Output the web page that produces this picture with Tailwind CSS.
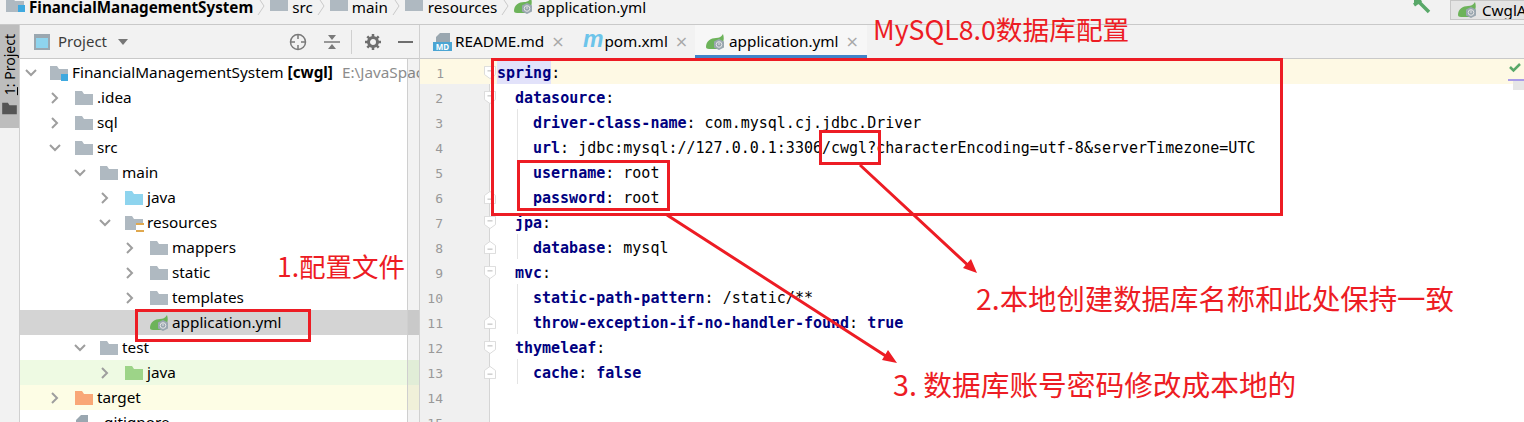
<!DOCTYPE html>
<html lang="en">
<head>
  <meta charset="UTF-8" />
  <title>application.yml - FinancialManagementSystem</title>
  <script src="https://cdn.jsdelivr.net/npm/@tailwindcss/browser@4"></script>
</head>
<body class="w-[1524px] h-[422px] overflow-hidden bg-white text-black font-['Noto_Sans',sans-serif] relative">

  <!-- icon defs -->
  <svg class="hidden">
    <symbol id="folder" viewBox="0 0 18 16"><path d="M0 1h7l2 3h9v11H0z" fill="#afb9c1"/></symbol>
    <symbol id="folder-blue" viewBox="0 0 18 16"><path d="M0 1h7l2 3h9v11H0z" fill="#8ed4ee"/></symbol>
    <symbol id="folder-green" viewBox="0 0 18 16"><path d="M0 1h7l2 3h9v11H0z" fill="#9dd488"/></symbol>
    <symbol id="folder-orange" viewBox="0 0 18 16"><path d="M0 1h7l2 3h9v11H0z" fill="#f9a777"/></symbol>
    <symbol id="right" viewBox="0 0 10 12"><path d="M2 1l5 5-5 5" fill="none" stroke="#9e9e9e" stroke-width="2"/></symbol>
    <symbol id="down" viewBox="0 0 12 10"><path d="M1 2l5 5 5-5" fill="none" stroke="#9e9e9e" stroke-width="2"/></symbol>
    <symbol id="spring" viewBox="0 0 20 16">
      <path d="M0 13C0 7 5 4 10 4c3 0 5-1 7-4 1 3 1 6 0 8l-6 7H3C1 15 0 14 0 13z" fill="#6db35a"/>
      <path d="M13 5l5 2.500v6L13 16l-5-2.500v-6z" fill="#9aa7b0"/>
      <circle cx="13" cy="10.500" r="2.800" fill="none" stroke="#e6e6e6" stroke-width="1"/>
      <path d="M13 8.500v2.500" stroke="#e6e6e6" stroke-width="1"/>
    </symbol>
    <symbol id="fold-open" viewBox="0 0 12 16" preserveAspectRatio="none"><path d="M.5.500h11v10l-5.500 5-5.500-5z" fill="#fff" stroke="#d8d8d8"/><path d="M3.500 6h5" stroke="#b0b0b0"/></symbol>
    <symbol id="fold-close" viewBox="0 0 12 16" preserveAspectRatio="none"><path d="M.5 15.500h11v-10l-5.500-5-5.500 5z" fill="#fff" stroke="#d8d8d8"/><path d="M3.500 10h5" stroke="#b0b0b0"/></symbol>
  </svg>

  <!-- breadcrumb bar -->
  <div class="h-[25px] bg-[#f2f2f2] border-b border-[#c9c9c9] flex items-start text-[15.2px] leading-[14px] overflow-hidden">
    <div class="flex items-center h-[14px] pl-[6px] flex-1">
      <span class="relative w-[23px] h-[16px] -mt-[4px]">
        <svg class="w-[18px] h-[16px]"><use href="#folder"/></svg>
        <i class="absolute left-[12px] top-[8px] w-[7px] h-[7px] bg-[#3fa9df]"></i>
      </span>
      <span class="font-bold">FinancialManagementSystem</span>
      <svg class="w-[8px] h-[18px] ml-[4px] mr-[5px] -mt-[2px]" viewBox="0 0 8 18"><path d="M1 0l6 9-6 9" fill="none" stroke="#c9c9c9"/></svg>
      <svg class="w-[18px] h-[16px] mr-[4px] -mt-[6px]"><use href="#folder"/></svg><span>src</span>
      <svg class="w-[8px] h-[18px] ml-[4px] mr-[5px] -mt-[2px]" viewBox="0 0 8 18"><path d="M1 0l6 9-6 9" fill="none" stroke="#c9c9c9"/></svg>
      <svg class="w-[18px] h-[16px] mr-[4px] -mt-[6px]"><use href="#folder"/></svg><span>main</span>
      <svg class="w-[8px] h-[18px] ml-[4px] mr-[5px] -mt-[2px]" viewBox="0 0 8 18"><path d="M1 0l6 9-6 9" fill="none" stroke="#c9c9c9"/></svg>
      <svg class="w-[18px] h-[16px] mr-[5px] -mt-[6px]"><use href="#folder"/></svg><span>resources</span>
      <svg class="w-[8px] h-[18px] ml-[4px] mr-[5px] -mt-[2px]" viewBox="0 0 8 18"><path d="M1 0l6 9-6 9" fill="none" stroke="#c9c9c9"/></svg>
      <svg class="w-[20px] h-[16px] mr-[3px] -mt-[3px]"><use href="#spring"/></svg><span>application.yml</span>
    </div>
    <svg class="w-[22px] h-[16px] mr-[15px]" viewBox="0 0 22 16"><path d="M1 1l7 0M4 0l12 12M8 0L1 5" fill="none" stroke="#59a869" stroke-width="3.500"/></svg>
    <div class="w-[74px] h-[20px] bg-[#e4e4e4] border border-[#c6c6c6] border-r-0 flex items-center pl-[7px] gap-[4px] overflow-hidden">
      <svg class="w-[20px] h-[16px] shrink-0"><use href="#spring"/></svg><span>CwglApplication</span>
    </div>
  </div>

  <div class="flex h-[397px]">
    <!-- tool window strip -->
    <div class="w-[20px] shrink-0 bg-[#f2f2f2] border-r border-[#d0d0d0]">
      <div class="h-[103px] bg-[#bdbdbd] flex flex-col items-center justify-end pb-[13px]">
        <span class="[writing-mode:vertical-rl] rotate-180 text-[14px] leading-none mb-[7px]"><span class="underline">1</span>: Project</span>
        <svg class="w-[15px] h-[13px]" viewBox="0 0 18 16"><path d="M0 1h7l2 3h9v11H0z" fill="#555"/></svg>
      </div>
    </div>

    <!-- project panel -->
    <div class="w-[400px] shrink-0 flex flex-col border-r border-[#d0d0d0]">
      <div class="h-[34px] bg-[#f2f2f2] border-b border-[#c9c9c9] flex items-center pl-[13px] text-[15px] text-[#3c3c3c]">
        <svg class="w-[18px] h-[18px] mr-[7px]" viewBox="0 0 18 18"><rect x="1" y="1" width="16" height="16" fill="#9aa7b0"/><rect x="3" y="5" width="12" height="10" fill="#8ed4ee"/></svg>
        <span>Project</span>
        <svg class="w-[10px] h-[6px] ml-[11px]" viewBox="0 0 10 6"><path d="M0 0h10L5 6z" fill="#777"/></svg>
        <svg class="w-[18px] h-[18px] ml-[161px]" viewBox="0 0 18 18"><circle cx="9" cy="9" r="7.500" fill="none" stroke="#7a7a7a" stroke-width="1.500"/><path d="M9 1v5M9 12v5M1 9h5M12 9h5" stroke="#7a7a7a" stroke-width="1.500"/></svg>
        <svg class="w-[16px] h-[16px] ml-[17px]" viewBox="0 0 16 16"><path d="M0 8h16" stroke="#7a7a7a" stroke-width="1.500"/><path d="M4 1h8L8 6zM4 15h8l-4-5z" fill="#7a7a7a"/></svg>
        <i class="w-px h-[24px] bg-[#d0d0d0] ml-[11px]"></i>
        <svg class="w-[16px] h-[16px] ml-[13px]" viewBox="0 0 16 16"><circle cx="8" cy="8" r="4.500" fill="none" stroke="#6e6e6e" stroke-width="3"/><path d="M8 0v3M8 13v3M0 8h3M13 8h3M2.300 2.300l2 2M11.700 11.700l2 2M2.300 13.700l2-2M11.700 4.300l2-2" stroke="#6e6e6e" stroke-width="2.500"/></svg>
        <i class="w-[15px] h-[2px] bg-[#6e6e6e] ml-[17px]"></i>
      </div>

      <div class="relative flex-1 pt-[1px] text-[15.300px] overflow-hidden">
        <div class="flex items-center h-[25px] pl-[5px] whitespace-nowrap">
          <svg class="w-[12px] h-[10px] mr-[13px] shrink-0"><use href="#down"/></svg>
          <span class="relative w-[22px] h-[16px] shrink-0"><svg class="w-[18px] h-[16px]"><use href="#folder"/></svg><i class="absolute left-[11px] top-[9px] w-[7px] h-[7px] bg-[#3fa9df]"></i></span>
          <span class="shrink-0">FinancialManagementSystem <b class="font-bold">[cwgl]</b></span>
          <span class="text-[#8c8c8c] ml-[9px] shrink-0">E:\JavaSpace</span>
        </div>
        <div class="flex items-center h-[25px] pl-[30px]"><svg class="w-[10px] h-[12px] mr-[15px]"><use href="#right"/></svg><svg class="w-[18px] h-[16px] mr-[4px]"><use href="#folder"/></svg><span>.idea</span></div>
        <div class="flex items-center h-[25px] pl-[30px]"><svg class="w-[10px] h-[12px] mr-[15px]"><use href="#right"/></svg><svg class="w-[18px] h-[16px] mr-[4px]"><use href="#folder"/></svg><span>sql</span></div>
        <div class="flex items-center h-[25px] pl-[29px]"><svg class="w-[12px] h-[10px] mr-[14px]"><use href="#down"/></svg><svg class="w-[18px] h-[16px] mr-[4px]"><use href="#folder"/></svg><span>src</span></div>
        <div class="flex items-center h-[25px] pl-[54px]"><svg class="w-[12px] h-[10px] mr-[14px]"><use href="#down"/></svg><svg class="w-[18px] h-[16px] mr-[4px]"><use href="#folder"/></svg><span>main</span></div>
        <div class="flex items-center h-[25px] pl-[80px]"><svg class="w-[10px] h-[12px] mr-[15px]"><use href="#right"/></svg><svg class="w-[18px] h-[16px] mr-[4px]"><use href="#folder-blue"/></svg><span>java</span></div>
        <div class="flex items-center h-[25px] pl-[79px]"><svg class="w-[12px] h-[10px] mr-[14px]"><use href="#down"/></svg>
          <span class="relative w-[18px] h-[16px] mr-[4px]"><svg class="w-[18px] h-[16px]"><use href="#folder"/></svg><i class="absolute left-[11px] top-[8px] w-[8px] h-[9px] bg-white border-y-2 border-[#e0a84e]"></i></span><span>resources</span></div>
        <div class="flex items-center h-[25px] pl-[105px]"><svg class="w-[10px] h-[12px] mr-[15px]"><use href="#right"/></svg><svg class="w-[18px] h-[16px] mr-[4px]"><use href="#folder"/></svg><span>mappers</span></div>
        <div class="flex items-center h-[25px] pl-[105px]"><svg class="w-[10px] h-[12px] mr-[15px]"><use href="#right"/></svg><svg class="w-[18px] h-[16px] mr-[4px]"><use href="#folder"/></svg><span>static</span></div>
        <div class="flex items-center h-[25px] pl-[105px]"><svg class="w-[10px] h-[12px] mr-[15px]"><use href="#right"/></svg><svg class="w-[18px] h-[16px] mr-[4px]"><use href="#folder"/></svg><span>templates</span></div>
        <div class="flex items-center h-[25px] pl-[130px] bg-[#d4d4d4]"><svg class="w-[20px] h-[16px] mr-[2px]"><use href="#spring"/></svg><span>application.yml</span></div>
        <div class="flex items-center h-[25px] pl-[54px]"><svg class="w-[12px] h-[10px] mr-[14px]"><use href="#down"/></svg><svg class="w-[18px] h-[16px] mr-[4px]"><use href="#folder"/></svg><span>test</span></div>
        <div class="flex items-center h-[25px] pl-[80px] bg-[#eefae3]"><svg class="w-[10px] h-[12px] mr-[15px]"><use href="#right"/></svg><svg class="w-[18px] h-[16px] mr-[4px]"><use href="#folder-green"/></svg><span>java</span></div>
        <div class="flex items-center h-[25px] pl-[30px] bg-[#fdfde5]"><svg class="w-[10px] h-[12px] mr-[15px]"><use href="#right"/></svg><svg class="w-[18px] h-[16px] mr-[4px]"><use href="#folder-orange"/></svg><span>target</span></div>
        <div class="flex items-center h-[25px] pl-[55px]"><svg class="w-[14px] h-[16px] mr-[11px]" viewBox="0 0 14 16"><path d="M1 16V5l5-5h7v16z" fill="#9aa7b0"/></svg><span>.gitignore</span></div>
        <!-- scrollbar track -->
        <div class="absolute right-0 top-0 bottom-0 w-[12px] bg-black/5 border-l border-[#cfcfcf]"></div>
      </div>
    </div>

    <!-- editor -->
    <div class="flex-1 flex flex-col min-w-0">
      <div class="h-[34px] bg-[#f2f2f2] border-b border-[#c9c9c9] flex text-[15.300px]">
        <div class="flex items-center w-[141px] pl-[13px]">
          <span class="relative w-[19px] h-[18px] mr-[3px] shrink-0"><svg class="w-[14px] h-[10px] ml-[3px]" viewBox="0 0 14 10"><path d="M0 10V4l4-4h10v10z" fill="#9aa7b0"/></svg><i class="absolute left-0 bottom-0 w-[19px] h-[9px] bg-[#4ba5d3] text-white not-italic text-[8px] leading-[9px] font-bold text-center">MD</i></span>
          <span>README.md</span><span class="ml-[7px] text-[#a8a8a8] text-[16px] font-['DejaVu_Sans']">×</span>
        </div>
        <div class="flex items-center w-[134px] pl-[22px]">
          <span class="font-['Liberation_Sans'] italic font-bold text-[23px] leading-none text-[#6cc4ea] mr-[1px] -mt-[4px]">m</span>
          <span>pom.xml</span><span class="ml-[7px] text-[#a8a8a8] text-[16px] font-['DejaVu_Sans']">×</span>
        </div>
        <div class="flex items-center w-[172px] pl-[11px] pt-[3px] bg-[#f7f7f7] border-b-[3px] border-[#4083c9]">
          <svg class="w-[20px] h-[16px] mr-[3px]"><use href="#spring"/></svg>
          <span>application.yml</span><span class="ml-[7px] text-[#a8a8a8] text-[16px] font-['DejaVu_Sans']">×</span>
        </div>
      </div>

      <div class="relative flex-1 font-['DejaVu_Sans_Mono',monospace] text-[15px] leading-[29px] whitespace-nowrap text-black overflow-hidden">
        <div class="flex h-[25px] bg-[#fef9e4]"><div class="w-[70px] shrink-0 relative pr-[46px] text-right text-[13px] text-[#999]">1<svg class="absolute left-[64px] top-[7px] w-[12px] h-[13px]"><use href="#fold-open"/></svg></div><div class="pl-[7px]"><b class="inline-block h-[25px] text-[#000080] bg-[#e2e2fa]">spring</b>:</div></div>
        <div class="flex h-[25px]"><div class="w-[70px] shrink-0 relative pr-[46px] text-right text-[13px] text-[#999] bg-[#f0f0f0] border-r border-[#d5d5d5]">2<svg class="absolute left-[64px] top-[7px] w-[12px] h-[13px]"><use href="#fold-open"/></svg></div><div class="pl-[25px]"><b class="text-[#000080]">datasource</b>:</div></div>
        <div class="flex h-[25px]"><div class="w-[70px] shrink-0 pr-[46px] text-right text-[13px] text-[#999] bg-[#f0f0f0] border-r border-[#d5d5d5]">3</div><div class="ml-[27px] pl-[15px] border-l border-[#e4e4e4]"><b class="text-[#000080]">driver-class-name</b>: com.mysql.cj.jdbc.Driver</div></div>
        <div class="flex h-[25px]"><div class="w-[70px] shrink-0 pr-[46px] text-right text-[13px] text-[#999] bg-[#f0f0f0] border-r border-[#d5d5d5]">4</div><div class="ml-[27px] pl-[15px] border-l border-[#e4e4e4]"><b class="text-[#000080]">url</b>: jdbc:mysql://127.0.0.1:3306/cwgl?characterEncoding=utf-8&amp;serverTimezone=UTC</div></div>
        <div class="flex h-[25px]"><div class="w-[70px] shrink-0 pr-[46px] text-right text-[13px] text-[#999] bg-[#f0f0f0] border-r border-[#d5d5d5]">5</div><div class="ml-[27px] pl-[15px] border-l border-[#e4e4e4]"><b class="text-[#000080]">username</b>: root</div></div>
        <div class="flex h-[25px]"><div class="w-[70px] shrink-0 relative pr-[46px] text-right text-[13px] text-[#999] bg-[#f0f0f0] border-r border-[#d5d5d5]">6<svg class="absolute left-[64px] top-[7px] w-[12px] h-[13px]"><use href="#fold-close"/></svg></div><div class="ml-[27px] pl-[15px] border-l border-[#e4e4e4]"><b class="text-[#000080]">password</b>: root</div></div>
        <div class="flex h-[25px]"><div class="w-[70px] shrink-0 relative pr-[46px] text-right text-[13px] text-[#999] bg-[#f0f0f0] border-r border-[#d5d5d5]">7<svg class="absolute left-[64px] top-[7px] w-[12px] h-[13px]"><use href="#fold-open"/></svg></div><div class="pl-[25px]"><b class="text-[#000080]">jpa</b>:</div></div>
        <div class="flex h-[25px]"><div class="w-[70px] shrink-0 relative pr-[46px] text-right text-[13px] text-[#999] bg-[#f0f0f0] border-r border-[#d5d5d5]">8<svg class="absolute left-[64px] top-[7px] w-[12px] h-[13px]"><use href="#fold-close"/></svg></div><div class="ml-[27px] pl-[15px] border-l border-[#e4e4e4]"><b class="text-[#000080]">database</b>: mysql</div></div>
        <div class="flex h-[25px]"><div class="w-[70px] shrink-0 relative pr-[46px] text-right text-[13px] text-[#999] bg-[#f0f0f0] border-r border-[#d5d5d5]">9<svg class="absolute left-[64px] top-[7px] w-[12px] h-[13px]"><use href="#fold-open"/></svg></div><div class="pl-[25px]"><b class="text-[#000080]">mvc</b>:</div></div>
        <div class="flex h-[25px]"><div class="w-[70px] shrink-0 pr-[46px] text-right text-[13px] text-[#999] bg-[#f0f0f0] border-r border-[#d5d5d5]">10</div><div class="ml-[27px] pl-[15px] border-l border-[#e4e4e4]"><b class="text-[#000080]">static-path-pattern</b>: /static/**</div></div>
        <div class="flex h-[25px]"><div class="w-[70px] shrink-0 relative pr-[46px] text-right text-[13px] text-[#999] bg-[#f0f0f0] border-r border-[#d5d5d5]">11<svg class="absolute left-[64px] top-[7px] w-[12px] h-[13px]"><use href="#fold-close"/></svg></div><div class="ml-[27px] pl-[15px] border-l border-[#e4e4e4]"><b class="text-[#000080]">throw-exception-if-no-handler-found</b>: <b class="text-[#000080]">true</b></div></div>
        <div class="flex h-[25px]"><div class="w-[70px] shrink-0 relative pr-[46px] text-right text-[13px] text-[#999] bg-[#f0f0f0] border-r border-[#d5d5d5]">12<svg class="absolute left-[64px] top-[7px] w-[12px] h-[13px]"><use href="#fold-open"/></svg></div><div class="pl-[25px]"><b class="text-[#000080]">thymeleaf</b>:</div></div>
        <div class="flex h-[25px]"><div class="w-[70px] shrink-0 relative pr-[46px] text-right text-[13px] text-[#999] bg-[#f0f0f0] border-r border-[#d5d5d5]">13<svg class="absolute left-[64px] top-[7px] w-[12px] h-[13px]"><use href="#fold-close"/></svg></div><div class="ml-[27px] pl-[15px] border-l border-[#e4e4e4]"><b class="text-[#000080]">cache</b>: <b class="text-[#000080]">false</b></div></div>
        <div class="flex h-[25px]"><div class="w-[70px] shrink-0 pr-[46px] text-right text-[13px] text-[#999] bg-[#f0f0f0] border-r border-[#d5d5d5]">14</div></div>
        <div class="flex h-[25px]"><div class="w-[70px] shrink-0 pr-[46px] text-right text-[13px] text-[#999] bg-[#f0f0f0] border-r border-[#d5d5d5]">15</div></div>
        <!-- right gutter marks -->
        <svg class="absolute right-[2px] top-[2px] w-[14px] h-[12px]" viewBox="0 0 14 12"><path d="M2 6l3.500 3.500L12 3" fill="none" stroke="#59a869" stroke-width="2.500"/></svg>
        <i class="absolute right-0 top-[20px] w-[16px] h-[2px] bg-[#a99ce8]"></i>
        <i class="absolute right-0 top-[22px] w-[11px] h-[9px] bg-[#e6e6e6]"></i>
      </div>
    </div>
  </div>

  <!-- red annotations drawn over the screenshot -->
  <div class="absolute left-[491px] top-[58px] w-[792px] h-[158px] border-[3px] border-[#ed1c24]"></div>
  <div class="absolute left-[819px] top-[130px] w-[62px] h-[35px] border-[3px] border-[#ed1c24]"></div>
  <div class="absolute left-[517px] top-[160px] w-[153px] h-[51px] border-[3px] border-[#ed1c24]"></div>
  <div class="absolute left-[135px] top-[309px] w-[176px] h-[33px] border-[3px] border-[#ed1c24]"></div>
  <svg class="absolute left-0 top-0 w-[1524px] h-[422px] pointer-events-none" viewBox="0 0 1524 422">
    <path d="M860 165L972 269M667 215L892 360" stroke="#ed1c24" stroke-width="3" fill="none"/>
    <path d="M977 273l-14-5 8-9zM897 363l-15-3 6-10z" fill="#ed1c24"/>
  </svg>
  <div class="absolute left-[873px] top-[11px] text-[26.700px] leading-[36px] text-[#ed1c24] font-['Noto_Sans_CJK_SC',sans-serif] whitespace-nowrap">MySQL8.0数据库配置</div>
  <div class="absolute left-[277px] top-[248px] text-[26.500px] leading-[36px] text-[#ed1c24] font-['Noto_Sans_CJK_SC',sans-serif] whitespace-nowrap">1.配置文件</div>
  <div class="absolute left-[976px] top-[280px] text-[28.400px] leading-[36px] text-[#ed1c24] font-['Noto_Sans_CJK_SC',sans-serif] whitespace-nowrap">2.本地创建数据库名称和此处保持一致</div>
  <div class="absolute left-[893px] top-[366px] text-[28.700px] leading-[36px] text-[#ed1c24] font-['Noto_Sans_CJK_SC',sans-serif] whitespace-nowrap">3. 数据库账号密码修改成本地的</div>
</body>
</html>
